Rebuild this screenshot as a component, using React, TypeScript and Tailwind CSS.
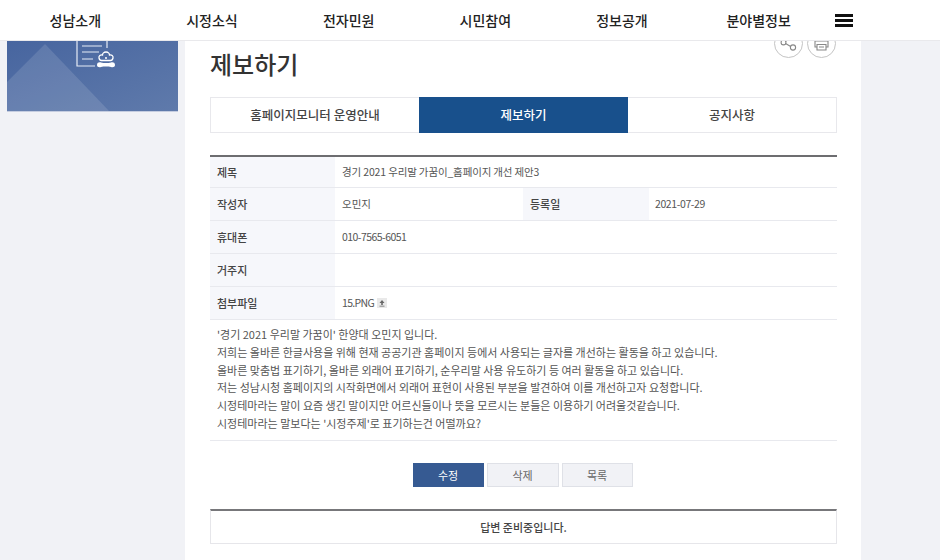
import React from 'react';

const font = { fontFamily: '"Noto Sans CJK KR", "Noto Sans", sans-serif' };
const nav = ['성남소개', '시정소식', '전자민원', '시민참여', '정보공개', '분야별정보'];
const body = [
  "'경기 2021 우리말 가꿈이' 한양대 오민지 입니다.",
  '저희는 올바른 한글사용을 위해 현재 공공기관 홈페이지 등에서 사용되는 글자를 개선하는 활동을 하고 있습니다.',
  '올바른 맞춤법 표기하기, 올바른 외래어 표기하기, 순우리말 사용 유도하기 등 여러 활동을 하고 있습니다.',
  '저는 성남시청 홈페이지의 시작화면에서 외래어 표현이 사용된 부분을 발견하여 이를 개선하고자 요청합니다.',
  '시정테마라는 말이 요즘 생긴 말이지만 어르신들이나 뜻을 모르시는 분들은 이용하기 어려울것같습니다.',
  "시정테마라는 말보다는 '시정주제'로 표기하는건 어떨까요?",
];

function Label({ children, h }: { children: React.ReactNode; h: string }) {
  return <div className={`${h} w-[125px] shrink-0 bg-[#f6f7fb] pl-[7px] flex items-center text-[11px] font-medium text-[#444]`}>{children}</div>;
}

function Row({ label, children, h = 'h-[32px]' }: { label: string; children?: React.ReactNode; h?: string }) {
  return (
    <div className="flex border-b border-[#e8e9ee]">
      <Label h={h}>{label}</Label>
      <div className="flex-1 pl-[7px] flex items-center text-[10.5px] text-[#555]">{children}</div>
    </div>
  );
}

export default function App() {
  return (
    <div style={font} className="w-[940px] h-[560px] overflow-hidden bg-[#f1f2f6] flex flex-col">
      <header className="h-[41px] shrink-0 bg-white border-b border-[#e9e9ec] flex items-center text-[14px] font-medium text-[#222]">
        <nav className="ml-[7px] w-[820px] grid grid-cols-6 items-center">
          {nav.map((n) => (
            <span key={n} className="text-center">{n}</span>
          ))}
        </nav>
        <div className="ml-[8px] flex flex-col gap-[2px] w-[18px]">
          <span className="h-[3px] bg-[#111]" />
          <span className="h-[3px] bg-[#111]" />
          <span className="h-[3px] bg-[#111]" />
        </div>
      </header>

      <div className="flex flex-1 min-h-0 pl-[7px]">
        <aside className="w-[171px] h-[71px] shrink-0 overflow-hidden bg-gradient-to-br from-[#47659f] to-[#5f7aab] border-b border-[#c5cde0]">
          <svg width="171" height="71" viewBox="0 0 171 71">
            <polygon points="0,41 38,3 103,71 0,71" fill="#ffffff" fillOpacity="0.12" />
            <path d="M70 -4V25H88M100 -4V7M75 5H95M75 11H92M75 18H86" stroke="#e6ebf5" strokeWidth="1.2" fill="none" />
            <path d="M99 11c2.5 0 3.5 2 3.5 3 2-.5 4 1 3.5 3-.3 1.5-1.500 2.500-2.500 2.500l-9 0c-1 0-2.200-1-2.500-2.500-.5-2 1.500-3.500 3.500-3 0-1 1-3 3.500-3z" fill="none" stroke="#fff" strokeWidth="1.3" />
            <circle cx="99" cy="17" r="1" fill="#fff" />
            <path d="M90 24c0-2.500 2-3 4-2.600 1.500.5 3 .5 5 .5s3.500 0 5-.5c2-.4 4 .1 4 2.600 0 2-2 2.500-4 2-1.500-.4-3-.5-5-.5s-3.500.1-5 .5c-2 .5-4 0-4-2z" fill="#fff" />
          </svg>
        </aside>

        <main className="relative ml-[7px] w-[676px] h-full bg-white pl-[25px] pr-[24px] overflow-hidden">
          <div className="absolute right-[25px] -top-[12px] flex gap-[4px] text-[#888]">
            <div className="w-[29px] h-[29px] rounded-full border border-[#c4c4c4] flex items-center justify-center">
              <svg width="19" height="19" viewBox="0 0 19 19" fill="none" stroke="currentColor" strokeWidth="1.1">
                <circle cx="4.5" cy="8.5" r="2.4" />
                <circle cx="14" cy="13.5" r="2.6" />
                <circle cx="13" cy="3" r="2.2" />
                <path d="M6.6 7.4L11 4.2M6.6 9.6L11.6 12.4" />
              </svg>
            </div>
            <div className="w-[29px] h-[29px] rounded-full border border-[#c4c4c4] flex items-center justify-center">
              <svg width="19" height="19" viewBox="0 0 19 19" fill="none" stroke="currentColor" strokeWidth="1.1">
                <path d="M5 2v5h9V2M3 7h13v6h-2M3 7v6h2M5 10.5h9V16H5zM7 13h5" />
              </svg>
            </div>
          </div>

          <h1 className="mt-[5px] h-[36px] leading-[36px] text-[24px] font-medium text-[#333]">제보하기</h1>

          <div className="mt-[15px] flex h-[36px] text-[12.5px] font-medium text-[#444] border border-[#e8e8ec]">
            <div className="w-[208px] flex items-center justify-center bg-white">홈페이지모니터 운영안내</div>
            <div className="w-[209px] -my-px flex items-center justify-center bg-[#18508c] text-white">제보하기</div>
            <div className="flex-1 flex items-center justify-center bg-white">공지사항</div>
          </div>

          <section className="mt-[22px] border-t-2 border-[#6d6d70]">
            <Row label="제목" h="h-[30px]"><span className="tracking-[-0.15px]">경기 2021 우리말 가꿈이_홈페이지 개선 제안3</span></Row>
            <div className="flex border-b border-[#e8e9ee]">
              <Label h="h-[32px]">작성자</Label>
              <div className="w-[188px] pl-[7px] flex items-center text-[10.5px] text-[#555]">오민지</div>
              <div className="w-[126px] h-[32px] bg-[#f6f7fb] pl-[7px] flex items-center text-[11px] font-medium text-[#444]">등록일</div>
              <div className="flex-1 pl-[6px] flex items-center text-[10.5px] tracking-[-0.4px] text-[#555]">2021-07-29</div>
            </div>
            <Row label="휴대폰"><span className="tracking-[-0.55px]">010-7565-6051</span></Row>
            <Row label="거주지" />
            <Row label="첨부파일">
              <span className="tracking-[-0.65px]">15.PNG</span>
              <span className="ml-[3px] w-[10px] h-[10px] bg-[#e9e9e9] flex items-center justify-center text-[#666]">
                <svg width="6" height="7" viewBox="0 0 6 7" fill="currentColor"><path d="M3 0L5.5 3H3.8V5H2.2V3H.5zM.5 5.8h5v.8h-5z" /></svg>
              </span>
            </Row>
          </section>

          <div className="pt-[6px] pl-[7px] pb-[7px] border-b border-[#e8e9ee] text-[11px] leading-[17.8px] text-[#555] whitespace-nowrap">
            {body.map((l) => (
              <p key={l}>{l}</p>
            ))}
          </div>

          <div className="mt-[22px] pr-[2px] flex justify-center gap-[3px] text-[11px]">
            <button className="w-[71px] h-[24px] bg-[#365a92] text-white">수정</button>
            <button className="w-[72px] h-[24px] bg-[#f1f2f6] border border-[#dfe1e7] text-[#666]">삭제</button>
            <button className="w-[71px] h-[24px] bg-[#f1f2f6] border border-[#dfe1e7] text-[#666]">목록</button>
          </div>

          <div className="mt-[22px] h-[35px] border-t-2 border-t-[#77777a] border-x border-b border-x-[#e6e6ea] border-b-[#e6e6ea] flex items-center justify-center text-[11px] font-medium text-[#444]">
            답변 준비중입니다.
          </div>
        </main>
      </div>
    </div>
  );
}
